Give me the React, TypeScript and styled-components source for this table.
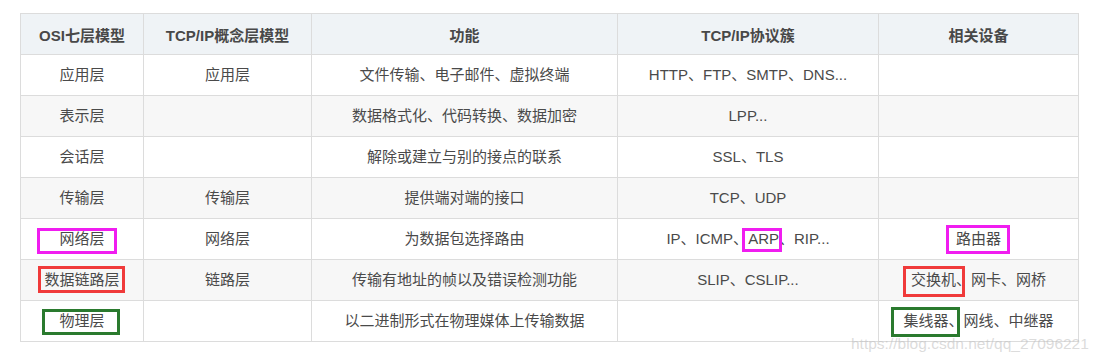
import styled, { createGlobalStyle } from "styled-components";

const GlobalStyle = createGlobalStyle`
  body {
    margin: 0;
    background: #fff;
    font-family: "Liberation Sans", "Noto Sans CJK SC", sans-serif;
  }
`;

type MarkColor = "magenta" | "red" | "green";

interface Inset {
  l: number;
  r: number;
  t: number;
  b: number;
}

interface Cell {
  text: string;
  mark?: { part: string; color: MarkColor; inset: Inset };
}

const colors: Record<MarkColor, string> = {
  magenta: "#f01df0",
  red: "#f03a3a",
  green: "#2a7a2e",
};

const headers = ["OSI七层模型", "TCP/IP概念层模型", "功能", "TCP/IP协议簇", "相关设备"];
const colWidths = [123, 168, 306, 261, 200];

const rows: Cell[][] = [
  [
    { text: "应用层" },
    { text: "应用层" },
    { text: "文件传输、电子邮件、虚拟终端" },
    { text: "HTTP、FTP、SMTP、DNS..." },
    { text: "" },
  ],
  [
    { text: "表示层" },
    { text: "" },
    { text: "数据格式化、代码转换、数据加密" },
    { text: "LPP..." },
    { text: "" },
  ],
  [
    { text: "会话层" },
    { text: "" },
    { text: "解除或建立与别的接点的联系" },
    { text: "SSL、TLS" },
    { text: "" },
  ],
  [
    { text: "传输层" },
    { text: "传输层" },
    { text: "提供端对端的接口" },
    { text: "TCP、UDP" },
    { text: "" },
  ],
  [
    { text: "", mark: { part: "网络层", color: "magenta", inset: { l: -22, r: -12, t: -2, b: -7 } } },
    { text: "网络层" },
    { text: "为数据包选择路由" },
    { text: "IP、ICMP、|、RIP...", mark: { part: "ARP", color: "magenta", inset: { l: -6, r: -3, t: -2, b: -5 } } },
    { text: "", mark: { part: "路由器", color: "magenta", inset: { l: -10, r: -9, t: -5, b: -7 } } },
  ],
  [
    { text: "", mark: { part: "数据链路层", color: "red", inset: { l: -6, r: -5, t: -5, b: -5 } } },
    { text: "链路层" },
    { text: "传输有地址的帧以及错误检测功能" },
    { text: "SLIP、CSLIP..." },
    { text: "|网卡、网桥", mark: { part: "交换机、", color: "red", inset: { l: -8, r: 6, t: -5, b: -9 } } },
  ],
  [
    { text: "", mark: { part: "物理层", color: "green", inset: { l: -17, r: -15, t: -3, b: -6 } } },
    { text: "" },
    { text: "以二进制形式在物理媒体上传输数据" },
    { text: "" },
    { text: "|网线、中继器", mark: { part: "集线器、", color: "green", inset: { l: -12, r: 4, t: -5, b: -8 } } },
  ],
];

function CellContent({ cell }: { cell: Cell }) {
  if (!cell.mark) return <>{cell.text}</>;
  const mark = (
    <Mark $color={colors[cell.mark.color]} $inset={cell.mark.inset}>
      {cell.mark.part}
    </Mark>
  );
  if (!cell.text) return mark;
  const [before, after] = cell.text.split("|");
  return (
    <>
      {before}
      {mark}
      {after}
    </>
  );
}

function App() {
  return (
    <>
      <GlobalStyle />
      <Page>
        <Table>
          <colgroup>
            {colWidths.map((w, i) => (
              <col key={i} style={{ width: w }} />
            ))}
          </colgroup>
          <thead>
            <tr>
              {headers.map((h) => (
                <HeadCell key={h}>{h}</HeadCell>
              ))}
            </tr>
          </thead>
          <tbody>
            {rows.map((row, i) => (
              <Row key={i} $striped={i % 2 === 1}>
                {row.map((cell, j) => (
                  <BodyCell key={j}>
                    <CellContent cell={cell} />
                  </BodyCell>
                ))}
              </Row>
            ))}
          </tbody>
        </Table>
        <Watermark>https://blog.csdn.net/qq_27096221</Watermark>
      </Page>
    </>
  );
}

const Page = styled.div`
  position: relative;
  width: 1102px;
  height: 361px;
  padding: 13px 0 0 20px;
  box-sizing: border-box;
  overflow: hidden;
`;

const Table = styled.table`
  border-collapse: collapse;
  table-layout: fixed;
  width: 1058px;
  font-size: 15px;
  color: #4a4a4a;
`;

const HeadCell = styled.th`
  height: 41px;
  padding: 0 8px;
  box-sizing: border-box;
  border: 1px solid #dcdcdc;
  background: #eff3f6;
  font-weight: bold;
  color: #484848;
  text-align: center;
`;

const Row = styled.tr<{ $striped: boolean }>`
  background: ${(p) => (p.$striped ? "#f7f7f7" : "#fff")};
`;

const BodyCell = styled.td`
  height: 41px;
  padding: 0 8px;
  box-sizing: border-box;
  border: 1px solid #dcdcdc;
  text-align: center;
  white-space: nowrap;
  line-height: 20px;
`;

const Mark = styled.span<{ $color: string; $inset: Inset }>`
  position: relative;
  &::after {
    content: "";
    position: absolute;
    left: ${(p) => p.$inset.l}px;
    right: ${(p) => p.$inset.r}px;
    top: ${(p) => p.$inset.t}px;
    bottom: ${(p) => p.$inset.b}px;
    border: 3px solid ${(p) => p.$color};
    pointer-events: none;
  }
`;

const Watermark = styled.div`
  position: absolute;
  left: 851px;
  top: 335px;
  font-size: 15.5px;
  color: rgba(190, 190, 190, 0.55);
  white-space: nowrap;
`;

export default App;
